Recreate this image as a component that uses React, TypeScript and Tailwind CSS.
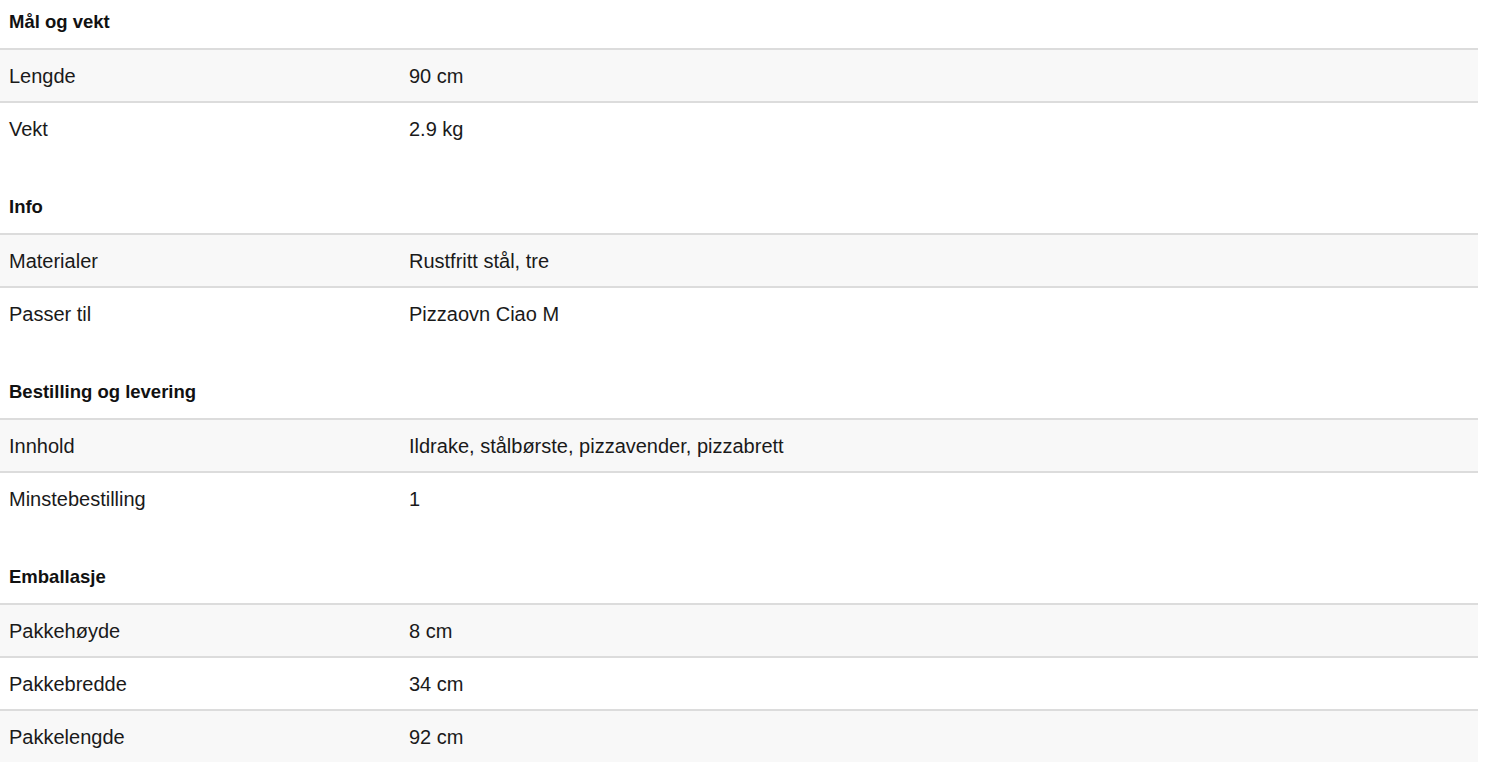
const sections: { title: string; rows: [string, string][] }[] = [
  { title: "Mål og vekt", rows: [["Lengde", "90 cm"], ["Vekt", "2.9 kg"]] },
  { title: "Info", rows: [["Materialer", "Rustfritt stål, tre"], ["Passer til", "Pizzaovn Ciao M"]] },
  {
    title: "Bestilling og levering",
    rows: [["Innhold", "Ildrake, stålbørste, pizzavender, pizzabrett"], ["Minstebestilling", "1"]],
  },
  {
    title: "Emballasje",
    rows: [["Pakkehøyde", "8 cm"], ["Pakkebredde", "34 cm"], ["Pakkelengde", "92 cm"]],
  },
];

export default function App() {
  return (
    <div className="w-[1478px] bg-white text-[#1a1a1a] font-['Liberation_Sans',Arial,sans-serif]">
      {sections.map((s) => (
        <section key={s.title} className="mb-[31px]">
          <h2 className="h-12 flex items-center pb-1 pl-[9px] text-[18.5px] font-bold text-[#111]">{s.title}</h2>
          <div>
            {s.rows.map(([label, value], i) => (
              <div
                key={label}
                className={
                  i % 2 === 0
                    ? "h-[53px] flex items-center border-t-2 border-[#dcdcdc] bg-[#f8f8f8] text-[20px]"
                    : "h-[53px] flex items-center border-t-2 border-[#dcdcdc] bg-white text-[20px]"
                }
              >
                <div className="w-[409px] shrink-0 pl-[9px]">{label}</div>
                <div className="flex-1">{value}</div>
              </div>
            ))}
          </div>
        </section>
      ))}
    </div>
  );
}
